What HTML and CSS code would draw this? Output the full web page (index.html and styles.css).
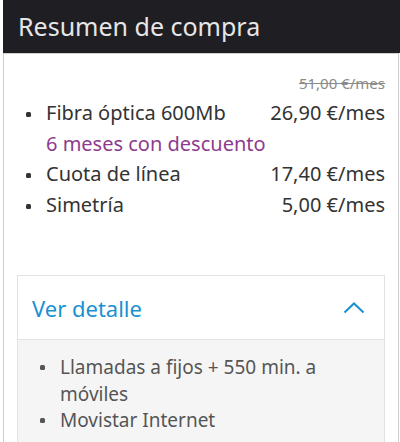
FILE: index.html
```html
<!DOCTYPE html>
<html lang="es">
<head>
    <meta charset="UTF-8">
    <title>Resumen de compra</title>
    <link rel="stylesheet" href="styles.css">
</head>
<body>
<div class="summary">
    <div class="summary-title">Resumen de compra</div>
    <div class="summary-card">
        <div class="old-price">51,00 €/mes</div>
        <ul class="items">
            <li>
                <div class="item-name">
                    <span>Fibra óptica 600Mb</span>
                    <span class="promo">6 meses con descuento</span>
                </div>
                <span class="price">26,90 €/mes</span>
            </li>
            <li>
                <div class="item-name">Cuota de línea</div>
                <span class="price">17,40 €/mes</span>
            </li>
            <li>
                <div class="item-name">Simetría</div>
                <span class="price">5,00 €/mes</span>
            </li>
        </ul>

        <div class="detail">
            <div class="detail-head">
                <span>Ver detalle</span>
                <svg width="22" height="12" viewBox="0 0 22 12">
                    <polyline points="1.5,10.5 11,1.5 20.5,10.5" fill="none" stroke="#1991d1" stroke-width="2"/>
                </svg>
            </div>
            <ul class="detail-list">
                <li>Llamadas a fijos + 550 min. a móviles</li>
                <li>Movistar Internet</li>
            </ul>
        </div>
    </div>
</div>
</body>
</html>
```

FILE: styles.css
```css
body {
    margin: 0;
    background: #fff;
    font-family: "Noto Sans", "Open Sans", sans-serif;
}

.summary {
    margin-left: 3px;
}

.summary-title {
    height: 53px;
    line-height: 53px;
    padding-left: 15px;
    background: #1e1e23;
    color: #e6e6e6;
    font-size: 25px;
}

.summary-card {
    margin-right: 1px;
    border: 1px solid #cfcfcf;
    padding: 19px 13px 40px;
}

.old-price {
    text-align: right;
    font-size: 15px;
    line-height: 20px;
    color: #8a8a8a;
    text-decoration: line-through;
}

.items {
    list-style: none;
    margin: 5px 0 0;
    padding: 0;
    font-size: 20px;
    line-height: 30.5px;
    color: #333;
}

.items li {
    display: flex;
}

.items li::before {
    content: "";
    flex: none;
    width: 5px;
    height: 5px;
    border-radius: 1.5px;
    background: #333;
    margin: 14px 15px 0 9px;
}

.item-name {
    display: flex;
    flex-direction: column;
}

.promo {
    color: #8d3b8f;
}

.price {
    margin-left: auto;
    white-space: nowrap;
}

.detail {
    margin-top: 55px;
    border: 1px solid #e2e2e2;
}

.detail-head {
    height: 63px;
    display: flex;
    align-items: center;
    justify-content: space-between;
    padding: 0 19px 0 14px;
    font-size: 22px;
    color: #1991d1;
    border-bottom: 1px solid #e2e2e2;
}

.detail-list {
    list-style: none;
    margin: 0;
    padding: 14px 20px 30px 0;
    background: #f5f5f5;
    font-size: 19px;
    line-height: 26.5px;
    color: #555;
}

.detail-list li {
    display: flex;
}

.detail-list li::before {
    content: "";
    flex: none;
    width: 5px;
    height: 5px;
    border-radius: 1.5px;
    background: #555;
    margin: 11px 15px 0 22px;
}
```
